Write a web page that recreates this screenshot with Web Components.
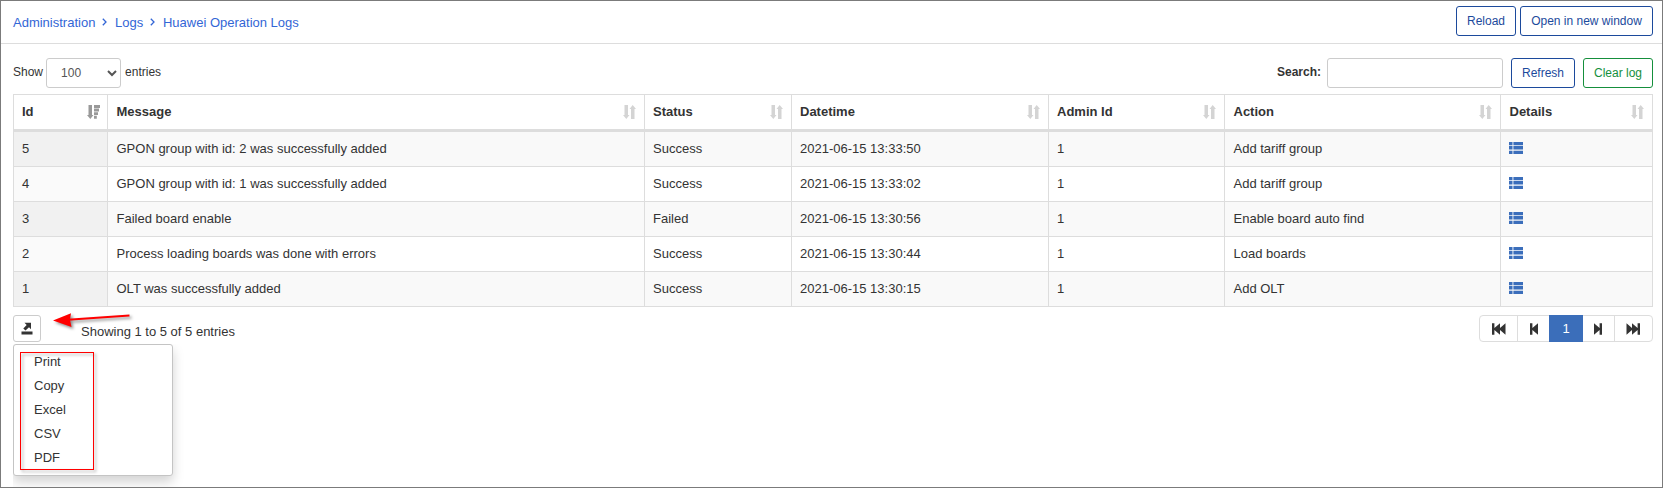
<!DOCTYPE html>
<html lang="en">
<head>
<meta charset="utf-8">
<title>Huawei Operation Logs</title>
<style>
html,body{margin:0;height:100%;background:#fff}
body{font:13px/18px "Liberation Sans",Arial,sans-serif;color:#333;overflow:hidden}
</style>
</head>
<body>
<logs-page></logs-page>
<script>
const define = (name, html, setup) => {
  const t = document.createElement('template');
  t.innerHTML = html;
  customElements.define(name, class extends HTMLElement {
    constructor() {
      super();
      this.attachShadow({mode: 'open'}).append(t.content.cloneNode(true));
    }
    connectedCallback() { if (setup) setup(this, this.shadowRoot); }
  });
};

define('ui-button', `
<style>
:host{display:block}
button{display:block;box-sizing:border-box;width:100%;height:30px;padding:0 0 1px;border:1px solid currentColor;border-radius:3px;background:#fff;color:#1c4a9c;font:12px/18px "Liberation Sans",Arial,sans-serif;white-space:nowrap}
:host([kind=success]) button{color:#158f3c}
</style>
<button><slot></slot></button>`);

define('bread-crumbs', `
<style>
:host{display:flex;align-items:center;color:#3366d6;font-size:13px}
svg{display:block;width:5px;height:8px;margin:-3px 7.7px 0 7px}
</style>
<span>Administration</span>
<svg viewBox="0 0 5 8"><path d="M.8.7 4 4 .8 7.3" fill="none" stroke="#3366d6" stroke-width="1.3"/></svg>
<span>Logs</span>
<svg viewBox="0 0 5 8"><path d="M.8.7 4 4 .8 7.3" fill="none" stroke="#3366d6" stroke-width="1.3"/></svg>
<span>Huawei Operation Logs</span>`);

define('page-header', `
<style>
:host{display:flex;justify-content:space-between;box-sizing:border-box;height:43px;padding:5px 9px 0 12px;border-bottom:1px solid #ddd}
nav{display:flex;gap:4px}
bread-crumbs{height:34px}
</style>
<bread-crumbs></bread-crumbs>
<nav><ui-button style="width:60px">Reload</ui-button><ui-button style="width:133px">Open in new window</ui-button></nav>`);

define('table-toolbar', `
<style>
:host{display:flex;justify-content:space-between;height:30px;margin:14px 9px 6px 12px;font-size:12px;line-height:28px}
div{display:flex}
select{box-sizing:border-box;width:75px;height:30px;margin:0 4px 0 3px;padding:0 0 1px 10px;border:1px solid #ccc;border-radius:3px;background:#fff;color:#555;font:12px "Liberation Sans",Arial,sans-serif}
b{line-height:29px;margin-right:6px}
input{box-sizing:border-box;width:176px;height:30px;margin:0;border:1px solid #ccc;border-radius:3px;background:#fff}
ui-button{margin-left:8px}
</style>
<div><span>Show</span><select><option>100</option></select><span>entries</span></div>
<div><b>Search:</b><input><ui-button style="width:64px">Refresh</ui-button><ui-button kind="success" style="width:70px">Clear log</ui-button></div>`);

define('sort-icon', `
<style>
:host{display:block;width:13px;height:14px;color:#d4d4d4;margin-right:1px}
:host([desc]){color:#999;margin-right:0}
svg{display:block;fill:currentColor}
.desc{display:none}
:host([desc]) .both{display:none}
:host([desc]) .desc{display:block}
</style>
<svg class="both" width="13" height="14" viewBox="0 0 13 14"><path d="M1.500 0H5v10h1.500L3.300 14 0 10h1.500zM8 14V4H6.5L9.7 0 13 4h-1.500v10z"/></svg>
<svg class="desc" width="13" height="14" viewBox="0 0 13 14"><path d="M1.500 0H5v10h1.500L3.3 14 0 10h1.500zM7 0h6v2.900H7zM7 3.600h5v2.900H7zM7 7.200h4v2.900H7zM7 10.800h2.8v2.900H7z"/></svg>`);

define('list-icon', `
<style>:host{display:block;width:14px;height:12px;margin-top:-2px}svg{display:block;fill:#3b6ebb}</style>
<svg width="14" height="12" viewBox="0 0 14 12"><path d="M0 0h3.5v3.200H0zM4.400 0H14v3.200H4.400zM0 4.100h3.5v3.500H0zM4.400 4.100H14v3.500H4.400zM0 8.700h3.5V12H0zM4.400 8.700H14V12H4.400z"/></svg>`);

define('log-cell', `
<style>
:host{display:flex;align-items:center;justify-content:space-between;box-sizing:border-box;height:35px;padding:0 7px 1px 8px;border-left:1px solid #ddd;border-bottom:1px solid #ddd}
:host([wide]){padding-left:8.5px}
:host([head]){height:38px;padding-bottom:0;border-top:1px solid #ddd;border-bottom-width:3px;font-weight:bold}
:host([last]){border-right:1px solid #ddd}
</style>
<slot></slot>`);

define('log-table', `
<style>
:host{display:block;margin:0 9px 0 12px}
div{display:grid;grid-template-columns:94px 537px 147px 257px 176px 276px 153px}
sort-icon{margin-top:-1px}
</style><div></div>`, (el, root) => {
  const rows = [
    ['5', 'GPON group with id: 2 was successfully added', 'Success', '2021-06-15 13:33:50', '1', 'Add tariff group'],
    ['4', 'GPON group with id: 1 was successfully added', 'Success', '2021-06-15 13:33:02', '1', 'Add tariff group'],
    ['3', 'Failed board enable', 'Failed', '2021-06-15 13:30:56', '1', 'Enable board auto find'],
    ['2', 'Process loading boards was done with errors', 'Success', '2021-06-15 13:30:44', '1', 'Load boards'],
    ['1', 'OLT was successfully added', 'Success', '2021-06-15 13:30:15', '1', 'Add OLT']
  ];
  const wide = i => i === 1 || i === 5 || i === 6 ? ' wide' : '';
  let html = ['Id', 'Message', 'Status', 'Datetime', 'Admin Id', 'Action', 'Details'].map((h, i) =>
    `<log-cell head${wide(i)}${i === 6 ? ' last' : ''}><span>${h}</span><sort-icon${i ? '' : ' desc'}></sort-icon></log-cell>`).join('');
  rows.forEach((r, n) => {
    const odd = n % 2 === 0;
    r.forEach((v, i) => {
      const bg = i ? (odd ? '#f9f9f9' : '#fff') : (odd ? '#f1f1f1' : '#fafafa');
      html += `<log-cell${wide(i)} style="background:${bg}"><span>${v}</span></log-cell>`;
    });
    html += `<log-cell last style="background:${odd ? '#f9f9f9' : '#fff'}"><list-icon></list-icon></log-cell>`;
  });
  root.querySelector('div').innerHTML = html;
});

define('export-menu', `
<style>
:host{display:block;position:relative;width:28px;height:27px}
button{display:flex;align-items:center;justify-content:center;box-sizing:border-box;width:28px;height:27px;padding:0;border:1px solid #ccc;border-radius:3px;background:#fff}
.clip{position:absolute;left:0;top:29px;width:190px;height:143px;overflow:hidden}
ul{box-sizing:border-box;width:160px;height:132px;margin:0;padding:5px 0;list-style:none;border:1px solid #c4c4c4;border-radius:3px;background:#fff;box-shadow:0 6px 12px rgba(0,0,0,.175)}
li{height:24px;line-height:24px;padding-left:20px}
</style>
<button aria-label="Export"><svg width="12" height="13" viewBox="0 0 12 13" fill="#333"><path d="M3.500.8H10v6.400L8 5.200 4.500 8.600 2.300 6.500l3.400-3.500zM.5 9.600h11v2.900H.5z"/></svg></button>
<div class="clip"><ul><li>Print</li><li>Copy</li><li>Excel</li><li>CSV</li><li>PDF</li></ul></div>`);

define('page-nav', `
<style>
:host{display:flex;box-sizing:border-box;height:27px;width:174px;border:1px solid #ddd;border-radius:4px}
span{display:flex;align-items:center;justify-content:center;box-sizing:border-box;height:25px}
.d{border-right:1px solid #ddd}
.on{height:27px;margin-top:-1px;background:#3b6eba;color:#fff}
svg{display:block;fill:#333}
</style>
<span class="d" style="width:38px"><svg width="14" height="12" viewBox="0 0 14 12"><path d="M0 .3h2.400v4.700L8 .3v4.700L13.500.3v11.400L8 7v4.700L2.400 7v4.700H0z"/></svg></span>
<span style="width:31px"><svg width="8" height="12" viewBox="0 0 8 12"><path d="M0 .3h2.400v4.700L8 .3v11.400L2.400 7v4.700H0z"/></svg></span>
<span class="on" style="width:34px">1</span>
<span class="d" style="width:32px"><svg style="margin-right:1px" width="8" height="12" viewBox="0 0 8 12"><path d="M8 .3H5.600v4.700L0 .3v11.400L5.600 7v4.700H8z"/></svg></span>
<span style="width:37px"><svg style="margin-right:1px" width="14" height="12" viewBox="0 0 14 12"><path d="M14 .3h-2.400v4.700L6 .3v4.700L.5.3v11.400L6 7v4.700L11.600 7v4.700H14z"/></svg></span>`);

define('table-footer', `
<style>
:host{display:flex;margin:8px 9px 0 12px}
p{flex:1;margin:8px 0 0 40px}
</style>
<export-menu></export-menu><p>Showing 1 to 5 of 5 entries</p><page-nav></page-nav>`);

define('red-marks', `
<style>:host{position:absolute;left:0;top:300px;pointer-events:none}svg{display:block;overflow:visible}</style>
<svg width="180" height="180" viewBox="0 300 180 180">
<g style="filter:drop-shadow(2px 2px 1.500px rgba(0,0,0,.45))">
<path d="M129.500 315.500 68 319.800" stroke="#f00" stroke-width="2"/><path d="M53 320.500 71 313.300 70 319.800 71.500 327z" fill="#f00"/>
</g>
<rect x="20.500" y="352.500" width="73" height="117" fill="none" stroke="#f00" style="filter:drop-shadow(2px 2px 1.500px rgba(0,0,0,.35))"/>
</svg>`);

define('logs-page', `
<style>
:host{display:block;position:relative;box-sizing:border-box;width:1663px;height:488px;border:1px solid #7b7b7b;overflow:hidden}
red-marks{margin:-1px}
</style>
<page-header></page-header><table-toolbar></table-toolbar><log-table></log-table><table-footer></table-footer><red-marks></red-marks>`);
</script>
</body>
</html>
